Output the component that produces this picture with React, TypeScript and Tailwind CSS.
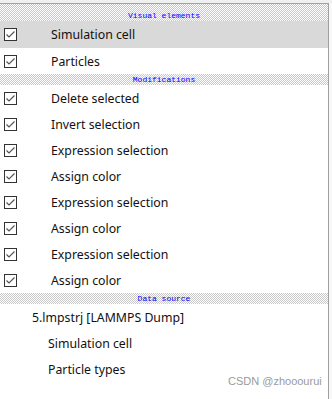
import React from "react";

const Check = () => (
  <div className="w-[13px] h-[13px] border border-[#333333] bg-white flex items-center justify-center shrink-0">
    <svg width="11" height="11" viewBox="0 0 11 11">
      <path d="M1.5 5.5 L4 8 L9.5 2.5" fill="none" stroke="#555555" strokeWidth="1.2" />
    </svg>
  </div>
);

const Header = ({ label, tall }: { label: string; tall?: boolean }) => (
  <div
    className={`${tall ? "h-[17px] items-end pb-[1px]" : "h-[11px] items-center"} flex justify-center bg-[repeating-conic-gradient(#c8c8c8_0%_25%,#ffffff_0%_50%)] bg-[length:2px_2px]`}
  >
    <span className="text-[8px] leading-[8px] text-[#0000ff] font-['Liberation_Mono',monospace]">{label}</span>
  </div>
);

const Row = ({ label, selected }: { label: string; selected?: boolean }) => (
  <div className={`h-[26px] flex items-center pl-[4px] ${selected ? "bg-[#d9d9d9]" : ""}`}>
    <Check />
    <span className="ml-[34px] pt-[2px] text-[12.3px] text-[#111111]">{label}</span>
  </div>
);

const Plain = ({ label, indent }: { label: string; indent: number }) => (
  <div className="h-[26px] flex items-center" style={{ paddingLeft: indent }}>
    <span className="pt-[2px] text-[12.3px] text-[#111111]">{label}</span>
  </div>
);

export default function App() {
  return (
    <div className="relative w-[332px] h-[399px] bg-white overflow-hidden font-['Noto_Sans',sans-serif]">
      <div className="h-[3px] bg-[#f0f0f0]" />
      <div className="flex">
        <div className="w-[328px] border-t border-[#a0a0a0] h-[396px]">
          <Header label="Visual elements" tall />
          <div className="h-[27px] flex items-center pl-[4px] bg-[#d9d9d9]">
            <Check />
            <span className="ml-[34px] pt-[2px] text-[12.3px] text-[#111111]">Simulation cell</span>
          </div>
          <Row label="Particles" />
          <Header label="Modifications" />
          <Row label="Delete selected" />
          <Row label="Invert selection" />
          <Row label="Expression selection" />
          <Row label="Assign color" />
          <Row label="Expression selection" />
          <Row label="Assign color" />
          <Row label="Expression selection" />
          <Row label="Assign color" />
          <Header label="Data source" />
          <Plain label="5.lmpstrj [LAMMPS Dump]" indent={32} />
          <Plain label="Simulation cell" indent={48} />
          <Plain label="Particle types" indent={48} />
        </div>
        <div className="w-[1px] bg-[#a0a0a0] h-[396px]" />
        <div className="w-[3px] bg-[#f8f8f8] h-[396px]" />
      </div>
      <div className="absolute left-[228px] top-[373px] whitespace-nowrap text-[11px] text-[#9a9a9a] font-['Liberation_Sans',sans-serif]">
        CSDN @zhooourui
      </div>
    </div>
  );
}
